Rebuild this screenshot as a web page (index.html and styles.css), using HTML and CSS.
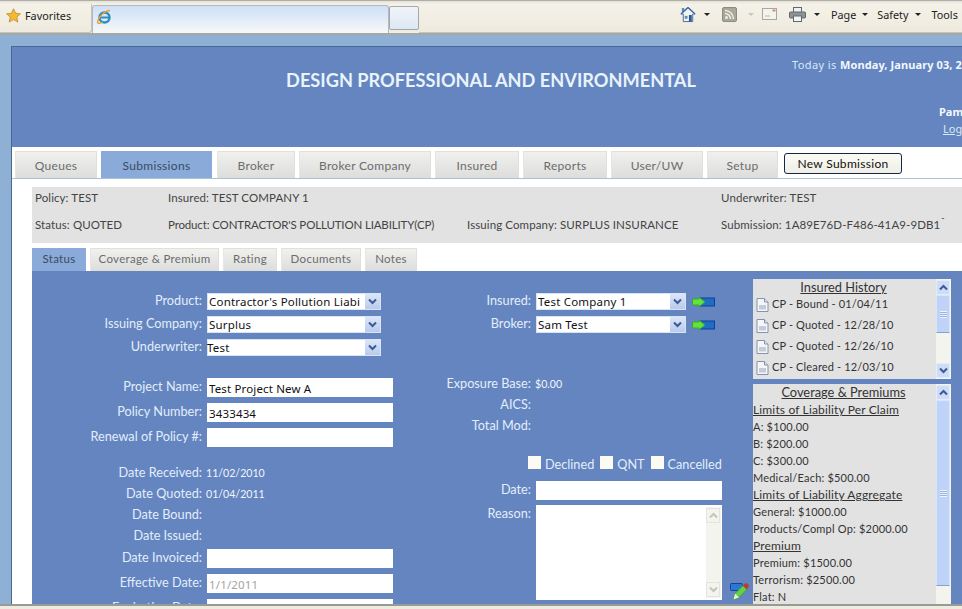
FILE: index.html
```html
<!DOCTYPE html>
<html lang="en">
<head>
    <meta charset="UTF-8">
    <title>Design Professional and Environmental</title>
    <link rel="stylesheet" href="styles.css">
</head>
<body>
    <svg class="defs" width="0" height="0">
        <symbol id="chev" viewBox="0 0 9 7"><path d="M1 1.5 4.5 5 8 1.5" fill="none" stroke="#3c5a94" stroke-width="2"/></symbol>
        <symbol id="chevup" viewBox="0 0 9 7"><path d="M1 5.5 4.5 2 8 5.5" fill="none" stroke="#3c5a94" stroke-width="2"/></symbol>
        <symbol id="chevgrey" viewBox="0 0 9 7"><path d="M1 1.5 4.5 5 8 1.5" fill="none" stroke="#c4c4b8" stroke-width="2"/></symbol>
        <symbol id="chevupgrey" viewBox="0 0 9 7"><path d="M1 5.5 4.5 2 8 5.5" fill="none" stroke="#c4c4b8" stroke-width="2"/></symbol>
        <symbol id="doc" viewBox="0 0 13 14">
            <path d="M1 .5h7.5L12 4v9.5H1z" fill="#f4f6fa" stroke="#8492ab"/>
            <path d="M8.5 .5V4H12" fill="#dfe5ee" stroke="#8492ab"/>
            <path d="M3 7h7v4.5H3z" fill="#c4ccd8"/>
        </symbol>
        <symbol id="goto" viewBox="0 0 23 10">
            <rect x="8" y="1" width="14.5" height="8" fill="#1e6fc4" stroke="#123f96"/>
            <path d="M.5 2h6.500V.3L13 5 7 9.700V8H.5z" fill="#62e23e" stroke="#3aa82a"/>
        </symbol>
    </svg>

    <div class="window">
        <div class="ie-bar">
            <div class="favorites">
                <svg class="star" viewBox="0 0 16 16"><path d="M8 .8 10.200 5.600 15.400 6.200 11.500 9.700 12.600 15 8 12.300 3.400 15 4.500 9.700 .6 6.200 5.800 5.600z" fill="#f5b82e" stroke="#b8862a" stroke-width=".8"/></svg>
                <span>Favorites</span>
            </div>
            <div class="ie-tab">
                <svg class="ie-logo" viewBox="0 0 16 16">
                    <circle cx="8.500" cy="8.500" r="5" fill="none" stroke="#2a8fc4" stroke-width="2.400"/>
                    <path d="M4 8.500h9.500" stroke="#2a8fc4" stroke-width="2"/>
                    <path d="M14 1.500C9 1.500 2 8 1.500 13.500c.5 1.500 3 1 5-.5" fill="none" stroke="#e8a030" stroke-width="1.300"/>
                </svg>
            </div>
            <div class="ie-newtab"></div>
            <div class="ie-tools">
                <svg class="tool-home" viewBox="0 0 17 17">
                    <path d="M8.500 1 1 8h2.500v8h10V8H16z" fill="#f2f2ee" stroke="#4a6a90"/>
                    <path d="M2 1.500h2.500v3L2 6.500z" fill="#6a8ab0"/>
                    <path d="M8.500 1 1 8" fill="none" stroke="#3a6ab0" stroke-width="1.500"/>
                    <path d="M8.500 1 16 8" fill="none" stroke="#3a6ab0" stroke-width="1.500"/>
                    <rect x="5" y="10" width="3" height="3" fill="#6a8ab8"/>
                    <rect x="9.500" y="9" width="3" height="7" fill="#2a5a9a"/>
                </svg>
                <i class="caret"></i>
                <svg class="tool-rss" viewBox="0 0 15 15">
                    <rect x=".5" y=".5" width="14" height="14" rx="1.500" fill="#a8a89a" stroke="#8c8c80"/>
                    <circle cx="4.500" cy="10.500" r="1.500" fill="#ededE4"/>
                    <path d="M3 6.500a5.500 5.500 0 0 1 5.500 5.500M3 3.500a8.500 8.500 0 0 1 8.500 8.500" fill="none" stroke="#ededE4" stroke-width="1.500"/>
                </svg>
                <i class="caret caret-faded"></i>
                <svg class="tool-mail" viewBox="0 0 15 12">
                    <rect x=".5" y=".5" width="14" height="11" fill="#f4f4ee" stroke="#a8a8a0"/>
                    <rect x="10.500" y="1.500" width="3" height="2" fill="#d88080"/>
                    <path d="M3 8h5" stroke="#b8b8b0"/>
                </svg>
                <svg class="tool-print" viewBox="0 0 17 15">
                    <rect x="4.500" y=".5" width="8" height="5" fill="#f0f0f0" stroke="#60686e"/>
                    <rect x=".5" y="5" width="16" height="6" rx="1" fill="#8c9298" stroke="#60686e"/>
                    <rect x="4.500" y="9" width="8" height="5.500" fill="#f4f4f4" stroke="#60686e"/>
                </svg>
                <i class="caret"></i>
                <span class="tool-label tool-page">Page</span><i class="caret"></i>
                <span class="tool-label tool-safety">Safety</span><i class="caret"></i>
                <span class="tool-label tool-tools">Tools</span><i class="caret"></i>
            </div>
        </div>

        <div class="page">
            <div class="app">
                <div class="header">
                    <h1 class="title">DESIGN PROFESSIONAL AND ENVIRONMENTAL</h1>
                    <div class="user">
                        <p class="today">Today is <b>Monday, January 03, 2</b></p>
                        <p class="name">Pam</p>
                        <a class="logout">Log</a>
                    </div>
                </div>

                <div class="main-tabs">
                    <a class="tab">Queues</a>
                    <a class="tab active">Submissions</a>
                    <a class="tab">Broker</a>
                    <a class="tab">Broker Company</a>
                    <a class="tab">Insured</a>
                    <a class="tab">Reports</a>
                    <a class="tab">User/UW</a>
                    <a class="tab">Setup</a>
                    <button class="new-btn">New Submission</button>
                </div>

                <div class="summary">
                    <span>Policy: TEST</span>
                    <span>Insured: TEST COMPANY 1</span>
                    <span></span>
                    <span>Underwriter: TEST</span>
                    <span>Status: QUOTED</span>
                    <span class="squeeze">Product: CONTRACTOR'S POLLUTION LIABILITY(CP)</span>
                    <span>Issuing Company: SURPLUS INSURANCE</span>
                    <span>Submission: 1A89E76D-F486-41A9-9DB1<sup class="tick">-</sup></span>
                </div>

                <div class="sub-tabs">
                    <a class="tab active">Status</a>
                    <a class="tab">Coverage &amp; Premium</a>
                    <a class="tab">Rating</a>
                    <a class="tab">Documents</a>
                    <a class="tab">Notes</a>
                </div>

                <div class="panel">
                    <div class="col-left">
                        <div class="group group-selects">
                            <div class="row"><label>Product:</label><div class="select"><span>Contractor's Pollution Liabi</span><b class="arrow"><svg><use href="#chev"/></svg></b></div></div>
                            <div class="row"><label>Issuing Company:</label><div class="select"><span>Surplus</span><b class="arrow"><svg><use href="#chev"/></svg></b></div></div>
                            <div class="row"><label>Underwriter:</label><div class="select"><span class="tight">Test</span><b class="arrow"><svg><use href="#chev"/></svg></b></div></div>
                        </div>
                        <div class="group group-inputs">
                            <div class="row"><label>Project Name:</label><input type="text" value="Test Project New A"></div>
                            <div class="row"><label>Policy Number:</label><input type="text" value="3433434"></div>
                            <div class="row"><label>Renewal of Policy #:</label><input type="text"></div>
                        </div>
                        <div class="group group-dates">
                            <div class="row text-row"><label>Date Received:</label><span class="value">11/02/2010</span></div>
                            <div class="row text-row"><label>Date Quoted:</label><span class="value">01/04/2011</span></div>
                            <div class="row text-row"><label>Date Bound:</label></div>
                            <div class="row text-row"><label>Date Issued:</label></div>
                        </div>
                        <div class="group group-inputs group-after-dates">
                            <div class="row"><label>Date Invoiced:</label><input type="text"></div>
                            <div class="row"><label>Effective Date:</label><input class="disabled" type="text" value="1/1/2011"></div>
                            <div class="row"><label>Expiration Date:</label><input type="text"></div>
                        </div>
                    </div>

                    <div class="col-mid">
                        <div class="group group-selects">
                            <div class="row"><label>Insured:</label><div class="select select-short"><span>Test Company 1</span><b class="arrow"><svg><use href="#chev"/></svg></b></div><svg class="goto"><use href="#goto"/></svg></div>
                            <div class="row"><label>Broker:</label><div class="select select-short"><span>Sam Test</span><b class="arrow"><svg><use href="#chev"/></svg></b></div><svg class="goto"><use href="#goto"/></svg></div>
                        </div>
                        <div class="group group-figures">
                            <div class="row text-row"><label>Exposure Base:</label><span class="value">$0.00</span></div>
                            <div class="row text-row"><label>AICS:</label></div>
                            <div class="row text-row"><label>Total Mod:</label></div>
                        </div>
                        <div class="checks">
                            <input type="checkbox"><span>Declined</span>
                            <input type="checkbox"><span>QNT</span>
                            <input type="checkbox"><span>Cancelled</span>
                        </div>
                        <div class="row date-row"><label>Date:</label><input type="text"></div>
                        <div class="row reason-row">
                            <label>Reason:</label>
                            <div class="textarea">
                                <div class="scrollbar scrollbar-off">
                                    <b class="sb-btn"><svg><use href="#chevupgrey"/></svg></b>
                                    <b class="sb-track"></b>
                                    <b class="sb-btn"><svg><use href="#chevgrey"/></svg></b>
                                </div>
                            </div>
                            <svg class="pencil" viewBox="0 0 19 17">
                                <rect x=".5" y=".5" width="12" height="7" rx="1" fill="#2a78d0" stroke="#173f96"/>
                                <path d="M3.500 16.500 5 10.500 13 2.500l4 4-8 8z" fill="#62d048" stroke="#3c9c34"/>
                                <path d="M13 2.500l1.500-1.500a2 2 0 0 1 3.500 3.500L17 6.500z" fill="#c03838"/>
                                <path d="M3.500 16.500 5 10.500l4 4z" fill="#e8f0d8"/>
                            </svg>
                        </div>
                    </div>

                    <div class="col-right">
                        <div class="box box-history">
                            <div class="box-body">
                                <h3 class="box-title">Insured History</h3>
                                <div class="hist"><svg class="doc"><use href="#doc"/></svg>CP - Bound - 01/04/11</div>
                                <div class="hist"><svg class="doc"><use href="#doc"/></svg>CP - Quoted - 12/28/10</div>
                                <div class="hist"><svg class="doc"><use href="#doc"/></svg>CP - Quoted - 12/26/10</div>
                                <div class="hist"><svg class="doc"><use href="#doc"/></svg>CP - Cleared - 12/03/10</div>
                            </div>
                            <div class="scrollbar">
                                <b class="sb-btn"><svg><use href="#chevup"/></svg></b>
                                <b class="sb-thumb thumb-short"><i></i></b>
                                <b class="sb-track"></b>
                                <b class="sb-btn"><svg><use href="#chev"/></svg></b>
                            </div>
                        </div>
                        <div class="box box-coverage">
                            <div class="box-body">
                                <h3 class="box-title">Coverage &amp; Premiums</h3>
                                <p class="line line-head">Limits of Liability Per Claim</p>
                                <p class="line">A: $100.00</p>
                                <p class="line">B: $200.00</p>
                                <p class="line">C: $300.00</p>
                                <p class="line">Medical/Each: $500.00</p>
                                <p class="line line-head">Limits of Liability Aggregate</p>
                                <p class="line">General: $1000.00</p>
                                <p class="line">Products/Compl Op: $2000.00</p>
                                <p class="line line-head">Premium</p>
                                <p class="line">Premium: $1500.00</p>
                                <p class="line">Terrorism: $2500.00</p>
                                <p class="line">Flat: N</p>
                            </div>
                            <div class="scrollbar">
                                <b class="sb-btn"><svg><use href="#chevup"/></svg></b>
                                <b class="sb-thumb thumb-long"><i></i></b>
                                <b class="sb-track"></b>
                            </div>
                        </div>
                    </div>
                </div>
            </div>
        </div>
        <div class="ie-status"></div>
    </div>
</body>
</html>
```

FILE: styles.css
```css
* {
    box-sizing: border-box;
}
html, body {
    margin: 0;
    padding: 0;
    overflow: hidden;
}
body {
    font-family: "Lato", "Liberation Sans", sans-serif;
    font-size: 13px;
    color: #333;
}
p, h1, h3 {
    margin: 0;
}
.defs {
    position: absolute;
}
.window {
    width: 962px;
    height: 609px;
    display: flex;
    flex-direction: column;
    overflow: hidden;
}

/* browser chrome */
.ie-bar {
    height: 35px;
    flex: none;
    display: flex;
    align-items: flex-end;
    background: linear-gradient(#e4e2d8 0, #f4f2e8 3px, #efeade 30px, #f2f2ec);
    border-top: 1px solid #b0aea4;
    border-bottom: 2px solid #a6a8a4;
    font-family: "Noto Sans", "Liberation Sans", sans-serif;
    font-size: 10.800px;
    color: #222;
}
.favorites {
    flex: none;
    width: 92px;
    height: 29px;
    display: flex;
    align-items: center;
    gap: 4px;
    padding: 0 0 5px 6px;
    border-bottom: 1px solid #c4c4bc;
    border-right: 1px solid #c4c4bc;
    border-bottom-right-radius: 3px;
}
.star {
    width: 15px;
    height: 15px;
}
.ie-tab {
    flex: none;
    width: 297px;
    height: 28px;
    padding: 3px 0 0 3px;
    border: 1px solid #b4b8bc;
    border-bottom: 0;
    border-radius: 3px 3px 0 0;
    background: linear-gradient(#cfe0f6, #e4edf8 55%, #f8f8f6);
}
.ie-logo {
    width: 16px;
    height: 16px;
}
.ie-newtab {
    flex: none;
    width: 30px;
    height: 24px;
    margin-bottom: 3px;
    border: 1px solid #a4a8ac;
    border-radius: 2px;
    background: linear-gradient(#f0f4f8, #dce8f4);
}
.ie-tools {
    flex: none;
    width: 543px;
    height: 32px;
    display: flex;
    align-items: center;
    padding: 0 0 5px 261px;
    white-space: nowrap;
    border-bottom: 1px solid #c4c4bc;
}
.tool-home {
    flex: none;
    width: 16px;
    height: 17px;
}
.caret {
    flex: none;
    width: 0;
    height: 0;
    margin-left: 8px;
    border: 3px solid transparent;
    border-top: 3px solid #222;
    border-bottom: 0;
}
.caret-faded {
    border-top-color: #c8c8bc;
}
.tool-rss {
    flex: none;
    width: 15px;
    height: 15px;
    margin-left: 12px;
}
.tool-rss + .caret {
    margin-left: 11px;
}
.tool-mail {
    flex: none;
    width: 15px;
    height: 12px;
    margin-left: 8px;
}
.tool-print {
    flex: none;
    width: 17px;
    height: 15px;
    margin-left: 12px;
}
.tool-label {
    margin-left: 9px;
}
.tool-page {
    margin-left: 11px;
}
.tool-tools {
    margin-left: 11px;
}
.tool-label + .caret {
    margin-left: 6px;
}

/* page */
.page {
    flex: 1;
    min-height: 0;
    overflow: hidden;
    padding: 11px 0 0 11px;
    background: #8fb0d5;
}
.app {
    width: 959px;
    height: 600px;
    background: #fff;
    border-top: 1px solid #4c6690;
    border-left: 1px solid #4c6690;
}
.ie-status {
    height: 5px;
    flex: none;
    background: #eeebe0;
    border-top: 2px solid #9a9a94;
}

/* header */
.header {
    height: 100px;
    display: grid;
    grid-template-columns: 780px 1fr;
    background: #6485bf;
}
.title {
    padding: 21px 0 0 178px;
    font-size: 18.200px;
    line-height: 24px;
    font-weight: 700;
    color: #e8f3fb;
    text-align: center;
    white-space: nowrap;
}
.user {
    padding-top: 10px;
    font-family: "Noto Sans", "Liberation Sans", sans-serif;
    font-size: 11px;
    line-height: 16px;
    color: #dbe8f6;
    white-space: nowrap;
    overflow: hidden;
}
.today {
    letter-spacing: .4px;
}
.today b {
    letter-spacing: .1px;
    color: #f2f8fc;
}
.name {
    margin: 31px 0 0 147px;
    font-weight: 700;
    color: #f2f8fc;
}
.logout {
    display: block;
    margin: 1px 0 0 151px;
    text-decoration: underline;
}

/* tabs */
.main-tabs, .sub-tabs {
    display: grid;
    gap: 4px;
    background: #fff;
}
.main-tabs {
    height: 32px;
    padding: 4px 0 0 3px;
    align-items: stretch;
    grid-template-columns: 82px 112px 78px 132px 84px 84px 92px 71px 120px;
    border-bottom: 1px solid #a9c0dc;
}
.tab {
    display: flex;
    align-items: center;
    justify-content: center;
    color: #6c6c6c;
    font-size: 12px;
    letter-spacing: .3px;
    white-space: nowrap;
    background: linear-gradient(#f0f0ee, #dddddb);
    border-top: 1px solid #e4e0d4;
    border-left: 1px solid #e8e6de;
    border-right: 1px solid #e0dfd8;
}
.tab.active {
    color: #3c4a60;
    background: #8aabd9;
    border-color: #8aabd9;
}
.main-tabs .tab.active {
    margin-right: 1px;
}
.new-btn {
    height: 21px;
    margin: 2px 0 0 2px;
    padding: 0;
    font-family: "Lato", "Liberation Sans", sans-serif;
    font-size: 12px;
    letter-spacing: .3px;
    color: #111;
    background: linear-gradient(#fbfbf6, #f0eee4);
    border: 1px solid #10284c;
    border-radius: 3px;
}
.summary {
    height: 56px;
    margin: 8px 0 0 20px;
    display: grid;
    grid-template-columns: 133px 299px 254px 1fr;
    grid-template-rows: 20px 34px;
    align-items: center;
    padding-left: 3px;
    background: #e2e2e2;
    font-size: 11.500px;
    letter-spacing: .1px;
    color: #444;
    white-space: nowrap;
}
.summary .squeeze {
    letter-spacing: -.15px;
}
.tick {
    margin-left: 1px;
    font-size: 9px;
    line-height: 0;
    vertical-align: 8px;
}
.sub-tabs {
    height: 23px;
    margin: 5px 0 0 20px;
    grid-template-columns: 54px 129px 54px 80px 52px;
}
.sub-tabs .tab {
    font-size: 11.500px;
    padding-bottom: 3px;
}

/* status panel */
.panel {
    margin-left: 20px;
    height: 340px;
    padding-top: 8px;
    display: flex;
    align-items: flex-start;
    background: #6485bf;
    overflow: hidden;
    color: #e2eefb;
}
.col-left, .col-mid {
    flex: none;
    width: 361px;
    padding-top: 14px;
}
.col-mid {
    width: 360px;
}
.col-right {
    flex: none;
    width: 198px;
    display: flex;
    flex-direction: column;
    gap: 5px;
}
.row {
    height: 19px;
    display: flex;
    align-items: center;
    gap: 5px;
}
.row label {
    flex: none;
    width: 170px;
    padding-bottom: 4px;
    text-align: right;
    font-size: 12.700px;
    line-height: 16px;
    white-space: nowrap;
}
.col-mid .row label {
    width: 138px;
}
.group-selects {
    display: flex;
    flex-direction: column;
    gap: 6px;
}
.group-selects .row {
    height: 17px;
}
.group-selects .row label {
    padding-bottom: 3px;
}
.group-inputs {
    margin-top: 22px;
    display: flex;
    flex-direction: column;
    gap: 6px;
}
.group-after-dates {
    margin-top: 3px;
}
.group-dates {
    margin-top: 15px;
}
.text-row {
    height: 21px;
}
.text-row label {
    padding-bottom: 2px;
}
.value {
    margin-left: -1px;
    font-size: 10.600px;
    color: #f0f6fc;
}
.select {
    flex: none;
    width: 174px;
    height: 17px;
    display: flex;
    align-items: center;
    justify-content: space-between;
    padding: 0 0 0 1px;
    background: #fff;
    border: 1px solid #d8e4f4;
    font-family: "Noto Sans", "Liberation Sans", sans-serif;
    font-size: 11.500px;
    letter-spacing: .2px;
    color: #111;
    white-space: nowrap;
}
.select .tight {
    margin-left: -2px;
}
.select-short {
    width: 150px;
}
.arrow {
    flex: none;
    width: 15px;
    height: 15px;
    display: flex;
    align-items: center;
    justify-content: center;
    background: linear-gradient(#dce6f8, #b8caee);
}
.arrow svg {
    width: 9px;
    height: 7px;
}
input[type="text"] {
    flex: none;
    width: 186px;
    height: 19px;
    padding: 1px 2px 0;
    background: #fff;
    border: 0;
    border-radius: 0;
    font-family: "Noto Sans", "Liberation Sans", sans-serif;
    font-size: 11.500px;
    letter-spacing: .15px;
    color: #111;
}
input.disabled {
    color: #a4a4a4;
}
.goto {
    flex: none;
    width: 23px;
    height: 10px;
    margin-left: 1px;
}
.group-figures {
    margin-top: 40px;
}
.checks {
    height: 17px;
    margin: 19px 0 0 135px;
    display: flex;
    align-items: center;
    font-size: 12.700px;
    white-space: nowrap;
}
.checks input {
    appearance: none;
    flex: none;
    width: 13px;
    height: 13px;
    margin: 0 4px 2px 0;
    background: #fbfbf4;
    border: 0;
}
.checks span {
    margin-right: 6px;
}
.date-row {
    margin-top: 9px;
}
.reason-row {
    height: 95px;
    margin-top: 5px;
    align-items: flex-start;
}
.textarea {
    flex: none;
    width: 186px;
    height: 95px;
    display: flex;
    justify-content: flex-end;
    padding: 2px 1px;
    background: #fff;
}
.pencil {
    flex: none;
    width: 19px;
    height: 17px;
    margin: 78px 0 0 3px;
}

/* side boxes */
.box {
    display: flex;
    background: #e2e2e2;
    color: #333;
    overflow: hidden;
}
.box-history {
    height: 100px;
}
.box-coverage {
    height: 240px;
}
.box-body {
    flex: 1;
    min-width: 0;
    font-size: 11px;
    white-space: nowrap;
}
.box-title {
    height: 17px;
    font-size: 12.800px;
    font-weight: 400;
    line-height: 16px;
    text-align: center;
    text-decoration: underline;
    margin-right: 2px;
}
.box-history .box-title {
    height: 14px;
}
.hist {
    height: 21px;
    padding-left: 3px;
    display: flex;
    align-items: center;
    gap: 3px;
    letter-spacing: .15px;
}
.doc {
    flex: none;
    width: 13px;
    height: 14px;
    margin-top: 2px;
}
.line {
    height: 17px;
    line-height: 17px;
    letter-spacing: .2px;
}
.line-head {
    font-size: 12px;
    letter-spacing: .15px;
    text-decoration: underline;
}
.scrollbar {
    flex: none;
    width: 15px;
    margin-right: 0;
    padding: 1px 1px 1px 0;
    display: flex;
    flex-direction: column;
    background: #f4f4ee;
}
.sb-btn {
    flex: none;
    height: 15px;
    display: flex;
    align-items: center;
    justify-content: center;
    background: #cddcf8;
    border: 1px solid #e4ecfa;
}
.sb-btn svg {
    width: 9px;
    height: 7px;
}
.sb-track {
    flex: 1;
}
.sb-thumb {
    flex: none;
    display: flex;
    align-items: center;
    justify-content: center;
    background: #bfd2f8;
    border: 1px solid #dbe5fa;
    border-bottom-color: #8aa0cc;
}
.sb-thumb i {
    width: 7px;
    height: 7px;
    background: repeating-linear-gradient(#eef3fc 0 1px, #9cb2dc 1px 2px);
}
.thumb-short {
    height: 38px;
}
.thumb-long {
    height: 186px;
}
.scrollbar-off .sb-btn {
    background: #f4f4ee;
    border-color: #e4e4dc;
}
```
